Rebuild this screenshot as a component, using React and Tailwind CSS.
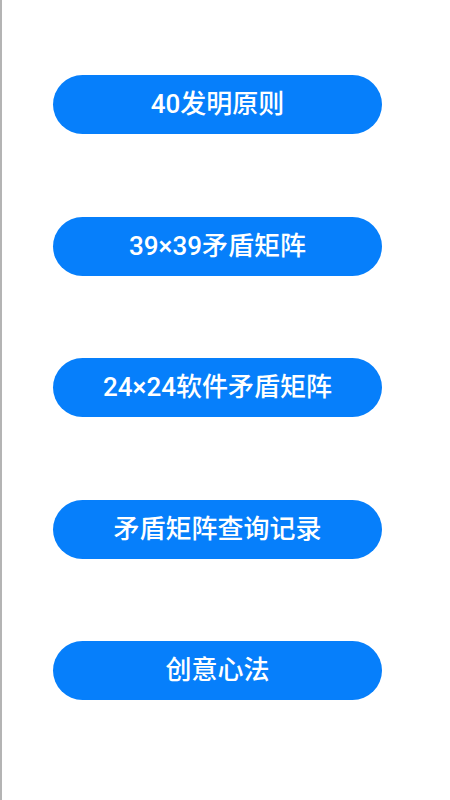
const ITEMS = ['40发明原则', '39×39矛盾矩阵', '24×24软件矛盾矩阵', '矛盾矩阵查询记录', '创意心法']

export default function App() {
  return (
    <div
      className="min-h-[800px] w-[450px] border-l-2 border-[#b4b4b4] bg-white"
      style={{ fontFamily: "Roboto, 'Noto Sans CJK SC', sans-serif" }}
    >
      <div className="flex flex-col gap-[82.5px] pl-[51px] pt-[75px]">
        {ITEMS.map((label) => (
          <button
            key={label}
            className="flex h-[59px] w-[329px] items-center justify-center rounded-full bg-[#067ffb] text-[26px] font-medium text-white"
          >
            {label}
          </button>
        ))}
      </div>
    </div>
  )
}
